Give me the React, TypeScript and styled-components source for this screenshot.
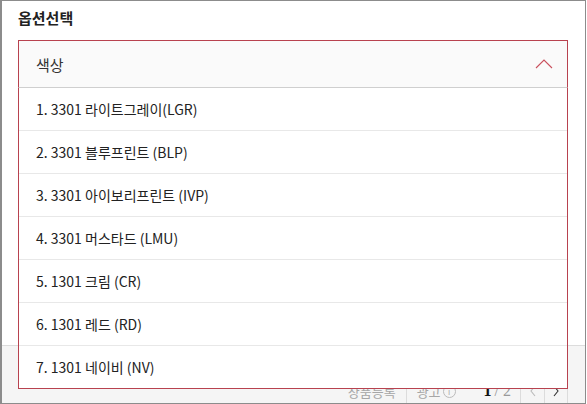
import React from 'react';
import styled, { createGlobalStyle } from 'styled-components';

const Global = createGlobalStyle`
  html, body { margin: 0; padding: 0; background: #fff; }
  body { font-family: "Noto Sans CJK KR", "Noto Sans", sans-serif; }
`;

const RED = '#b8424f';

const Frame = styled.div`
  position: relative;
  box-sizing: border-box;
  width: 586px;
  height: 404px;
  border: 1px solid #8c8c8c;
  border-left-width: 2px;
  display: flex;
  flex-direction: column;
  overflow: hidden;
  background: #fff;
`;

const Title = styled.h2`
  margin: 0;
  padding: 7px 0 0 16px;
  font-size: 15px;
  line-height: 20px;
  font-weight: 700;
  color: #222;
`;

const Select = styled.div`
  position: relative;
  z-index: 2;
  margin: 12px 0 0 16px;
  width: 550px;
`;

const SelectHead = styled.div`
  box-sizing: border-box;
  height: 48px;
  display: flex;
  align-items: center;
  justify-content: space-between;
  padding: 0 14px 0 17px;
  border: 1px solid ${RED};
  border-bottom-color: #cfcfcf;
  background: #fafafa;
  font-size: 15px;
  color: #333;
`;

const List = styled.ul`
  position: absolute;
  top: 100%;
  left: 0;
  right: 0;
  margin: 0;
  padding: 0;
  list-style: none;
  box-sizing: border-box;
  background: #fff;
  border: 1px solid ${RED};
  border-top: none;
`;

const Item = styled.li`
  height: 42px;
  display: flex;
  align-items: center;
  padding-left: 17px;
  font-size: 14px;
  color: #222;
  & + & { border-top: 1px solid #e8e8e8; }
`;

const Footer = styled.div`
  margin-top: auto;
  box-sizing: border-box;
  height: 58px;
  border-top: 1px solid #dcdcdc;
  background: #f5f5f5;
  display: flex;
  align-items: flex-end;
  justify-content: flex-end;
  padding-right: 17px;
`;

const Meta = styled.span<{ $sep?: boolean }>`
  height: 24px;
  display: flex;
  align-items: center;
  font-size: 13px;
  color: #a6a6a6;
  padding: 0 10px;
  border-left: ${p => (p.$sep ? '1px solid #dcdcdc' : 'none')};
`;

const Info = styled.span`
  display: inline-flex;
  align-items: center;
  justify-content: center;
  width: 11px;
  height: 11px;
  margin-left: 2px;
  border: 1px solid #bbb;
  border-radius: 50%;
  font-size: 8px;
  color: #aaa;
`;

const Pages = styled.span`
  height: 24px;
  display: flex;
  align-items: center;
  margin-left: 18px;
  padding-right: 9px;
  font-family: "Liberation Serif", serif;
  font-size: 16px;
  color: #999;
  b { color: #111; margin-right: 3px; }
`;

const PageBtn = styled.span<{ $active?: boolean }>`
  box-sizing: border-box;
  width: 24px;
  height: 24px;
  display: flex;
  align-items: center;
  justify-content: center;
  border-left: 1px solid #dcdcdc;
  border-right: ${p => (p.$active ? '1px solid #dcdcdc' : 'none')};
  color: ${p => (p.$active ? '#333' : '#ccc')};
`;

const Chevron = ({ dir, color, size = 16 }: { dir: 'up' | 'left' | 'right'; color: string; size?: number }) => {
  const d =
    dir === 'up' ? 'M1 12 L9 4 L17 12' : dir === 'left' ? 'M6 1 L2 6 L6 11' : 'M2 1 L6 6 L2 11';
  const w = dir === 'up' ? 18 : 8;
  const h = dir === 'up' ? 16 : 12;
  return (
    <svg width={dir === 'up' ? size + 2 : w} height={dir === 'up' ? size : h} viewBox={`0 0 ${w} ${h}`} fill="none">
      <path d={d} stroke={color} strokeWidth="1.1" />
    </svg>
  );
};

const options = [
  '1. 3301 라이트그레이(LGR)',
  '2. 3301 블루프린트 (BLP)',
  '3. 3301 아이보리프린트 (IVP)',
  '4. 3301 머스타드 (LMU)',
  '5. 1301 크림 (CR)',
  '6. 1301 레드 (RD)',
  '7. 1301 네이비 (NV)',
];

export default function App() {
  return (
    <>
      <Global />
      <Frame>
        <Title>옵션선택</Title>
        <Select>
          <SelectHead>
            <span>색상</span>
            <Chevron dir="up" color="#c9505d" />
          </SelectHead>
          <List>
            {options.map(o => (
              <Item key={o}>{o}</Item>
            ))}
          </List>
        </Select>
        <Footer>
          <Meta>상품등록</Meta>
          <Meta $sep>
            광고<Info>i</Info>
          </Meta>
          <Pages>
            <b>1</b>/ 2
          </Pages>
          <PageBtn>
            <Chevron dir="left" color="#bbb" />
          </PageBtn>
          <PageBtn $active>
            <Chevron dir="right" color="#333" />
          </PageBtn>
        </Footer>
      </Frame>
    </>
  );
}
